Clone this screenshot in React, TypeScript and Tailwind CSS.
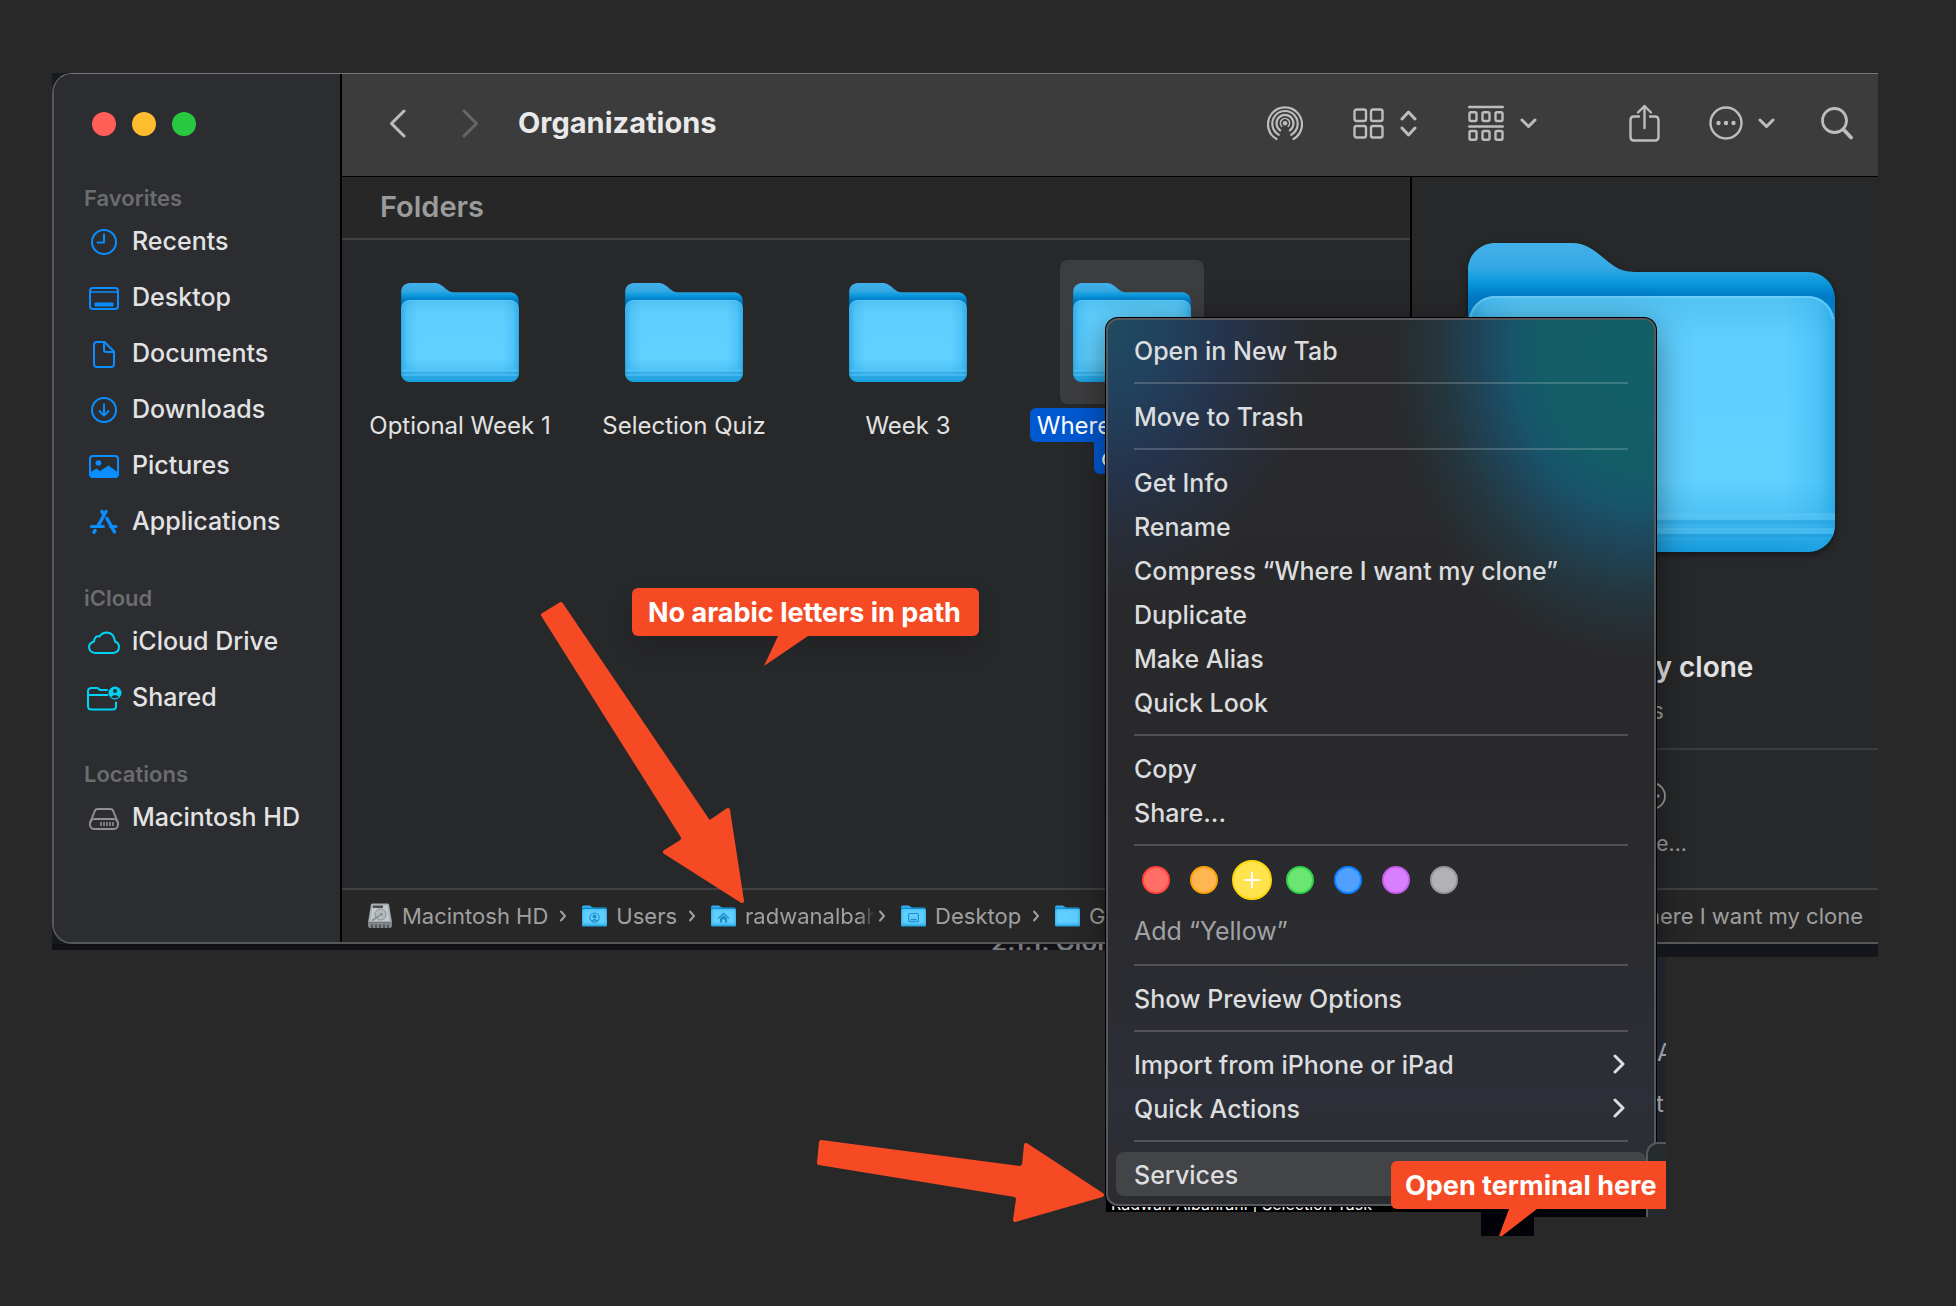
import type { ReactNode } from 'react'

const stroke = {
  fill: 'none',
  stroke: 'currentColor',
  strokeWidth: 2,
  strokeLinecap: 'round' as const,
  strokeLinejoin: 'round' as const,
}

/* ---------- folder artwork ---------- */

function Folder({ id, className, children }: { id: string; className: string; children?: ReactNode }) {
  return (
    <svg viewBox="0 0 367 309" className={className} aria-hidden="true">
      <defs>
        <linearGradient id={`${id}-back`} x1="0" y1="0" x2="0" y2="53" gradientUnits="userSpaceOnUse">
          <stop offset="0" stopColor="#43b0e9" />
          <stop offset="0.45" stopColor="#34a9e4" />
          <stop offset="0.75" stopColor="#0a98db" />
          <stop offset="1" stopColor="#007bc8" />
        </linearGradient>
        <linearGradient id={`${id}-front`} x1="0" y1="0" x2="0" y2="1">
          <stop offset="0" stopColor="#52c2f3" />
          <stop offset="0.18" stopColor="#5fcfff" />
          <stop offset="0.72" stopColor="#60d0ff" />
          <stop offset="0.85" stopColor="#4fc2f5" />
          <stop offset="0.93" stopColor="#2fabe6" />
          <stop offset="1" stopColor="#149cdd" />
        </linearGradient>
        <linearGradient id={`${id}-side`} x1="0" y1="0" x2="1" y2="0">
          <stop offset="0" stopColor="#1b9fe0" stopOpacity="0.7" />
          <stop offset="0.05" stopColor="#2ba9e8" stopOpacity="0.3" />
          <stop offset="0.14" stopColor="#2ba9e8" stopOpacity="0" />
          <stop offset="0.86" stopColor="#2ba9e8" stopOpacity="0" />
          <stop offset="0.95" stopColor="#2ba9e8" stopOpacity="0.3" />
          <stop offset="1" stopColor="#1b9fe0" stopOpacity="0.7" />
        </linearGradient>
      </defs>
      <path
        d="M0 120V27C0 12 12 0 27 0H104C118 0 126 7 137 16C148 25 153 29 170 29H340C355 29 367 41 367 56V120Z"
        fill={`url(#${id}-back)`}
      />
      <rect y="53" width="367" height="256" rx="27" fill={`url(#${id}-front)`} />
      <rect y="53" width="367" height="256" rx="27" fill={`url(#${id}-side)`} />
      <path d="M2 76C5 62 15 54 28 54H339C352 54 362 62 365 76" fill="none" stroke="#84dbff" strokeOpacity="0.5" strokeWidth="2" />
      <path d="M0 270H367V277H0Z" fill="#6bd0fb" fillOpacity="0.35" />
      <path d="M0 277H367V281H0Z" fill="#1f9edb" fillOpacity="0.4" />
      <path d="M1 285H366V291H1Z" fill="#6bd0fb" fillOpacity="0.35" />
      <path d="M2 291H365V294H2Z" fill="#1490d0" fillOpacity="0.3" />
      {children}
    </svg>
  )
}

const userMark = (
  <g fill="none" stroke="#1c8cc9" strokeWidth="16">
    <circle cx="184" cy="178" r="68" />
    <circle cx="184" cy="162" r="22" fill="#1c8cc9" />
    <path d="M142 226Q184 186 226 226" fill="#1c8cc9" />
  </g>
)
const homeMark = (
  <g fill="#1c8cc9">
    <path d="M184 104L270 186L258 198L184 130L110 198L98 186Z" />
    <path d="M132 190L184 142L236 190V250H204V206H164V250H132Z" />
  </g>
)
const deskMark = (
  <g fill="none" stroke="#1c8cc9" strokeWidth="16">
    <rect x="112" y="118" width="144" height="120" rx="14" />
    <path d="M140 208H228" strokeWidth="22" />
  </g>
)

function DriveIcon() {
  return (
    <svg viewBox="0 0 24 26" className="h-[26px] w-6 shrink-0" aria-hidden="true">
      <path d="M3 1.5Q3.2 .5 4.4 .5H19.6Q20.8 .5 21 1.500L24 19.500H0Z" fill="#a9aeb2" />
      <path d="M4.600 2.500H19.400L21.500 18H2.500Z" fill="#c3c8cb" />
      <path d="M5 2.500H15V5H4.700Z" fill="#4a4e52" />
      <circle cx="12.500" cy="11.500" r="5.500" fill="#b4babd" stroke="#868c91" strokeWidth="1" />
      <circle cx="13" cy="11.500" r="1.800" fill="#8d9398" />
      <path d="M4 17.500L11 13" stroke="#858b90" strokeWidth="1.500" />
      <path d="M0 19.500H24V22.500Q24 25 21.500 25H2.500Q0 25 0 22.500Z" fill="#82878b" />
      <path d="M4 21.500V25M8 21.500V25M12 21.500V25M16 21.500V25M20 21.500V25" stroke="#474b4f" strokeWidth="1.500" />
    </svg>
  )
}

/* ---------- sidebar ---------- */

type Item = { label: string; icon: ReactNode; color: string }

const BLUE = 'text-[#0a8dff]'
const CYAN = 'text-[#00d4f5]'

const favorites: Item[] = [
  {
    label: 'Recents',
    color: BLUE,
    icon: (
      <g {...stroke}>
        <circle cx="16" cy="14" r="12" />
        <path d="M16 6.500V14.500H9.500" />
      </g>
    ),
  },
  {
    label: 'Desktop',
    color: BLUE,
    icon: (
      <g {...stroke}>
        <rect x="2" y="4" width="28" height="21" rx="3" />
        <path d="M2 8H30" strokeWidth="1.500" />
        <rect x="6.500" y="18.500" width="19" height="4" rx="1" fill="currentColor" stroke="none" />
      </g>
    ),
  },
  {
    label: 'Documents',
    color: BLUE,
    icon: (
      <g {...stroke}>
        <path d="M9 2H16.500L26 11.500V24Q26 27 23 27H9Q6 27 6 24V5Q6 2 9 2Z" />
        <path d="M16 2.500V10Q16 12 18 12H25.500" />
      </g>
    ),
  },
  {
    label: 'Downloads',
    color: BLUE,
    icon: (
      <g {...stroke}>
        <circle cx="16" cy="14" r="12" />
        <path d="M16 8.500V19M11.500 15L16 19.500L20.500 15" />
      </g>
    ),
  },
  {
    label: 'Pictures',
    color: BLUE,
    icon: (
      <g {...stroke}>
        <rect x="2" y="4" width="28" height="21" rx="3" />
        <circle cx="10.500" cy="11" r="2.800" fill="currentColor" stroke="none" />
        <path d="M2 21L8.500 17L12 19.500L20.500 14L30 21V23Q30 25 28 25H4Q2 25 2 23Z" fill="currentColor" strokeWidth="1" />
      </g>
    ),
  },
  {
    label: 'Applications',
    color: BLUE,
    icon: (
      <g {...stroke} strokeWidth="3.500">
        <path d="M18 3.500L10 18" />
        <path d="M14 3.500L15.500 6" />
        <path d="M19 10.500L26.500 24" />
        <path d="M3.500 18.500H15.500M22.500 18.500H28" strokeWidth="3" />
        <path d="M7 22.500L6 24.200" />
      </g>
    ),
  },
]

const icloud: Item[] = [
  {
    label: 'iCloud Drive',
    color: CYAN,
    icon: (
      <path
        {...stroke}
        d="M7.500 25H25Q31 24.500 31 19Q31 15 27 13.500Q26 5 19 4.500Q14 4.500 11.500 8.500Q6.500 7.500 6 13.500Q1 15 1 19.500Q1.500 24.500 7.500 25Z"
      />
    ),
  },
  {
    label: 'Shared',
    color: CYAN,
    icon: (
      <g {...stroke}>
        <path d="M19 6H12L9.500 4H4Q0 4 0 7V22Q0 25.500 3.500 25.500H24.500Q28 25.500 28 22V18.500" />
        <path d="M0 11H19.500" />
        <circle cx="27" cy="9" r="6.500" fill="currentColor" stroke="none" />
        <circle cx="27" cy="7" r="2" fill="#2c2d31" stroke="none" />
        <path d="M23 13Q27 9 31 13Q27 15.500 23 13Z" fill="#2c2d31" stroke="none" />
      </g>
    ),
  },
]

const locations: Item[] = [
  {
    label: 'Macintosh HD',
    color: 'text-[#8f8f92]',
    icon: (
      <g {...stroke}>
        <path d="M2 19L7 6.500Q7.700 5 9.500 5H22.500Q24.300 5 25 6.500L30 19" />
        <rect x="2" y="15" width="28" height="10" rx="4.500" />
        <path d="M13 18.500V21.500M16 18.500V21.500M19 18.500V21.500M22 18.500V21.500M25 18.500V21.500" strokeWidth="1.600" />
      </g>
    ),
  },
]

function SidebarGroup({ title, items }: { title: string; items: Item[] }) {
  return (
    <section>
      <h2 className="h-8 pl-[30px] text-[22px] leading-8 font-semibold text-[#6b6c70]">{title}</h2>
      {items.map((item) => (
        <button key={item.label} type="button" className="flex h-14 w-full items-center gap-3 pl-[34px] text-left">
          <svg viewBox="0 0 32 28" className={`h-7 w-8 shrink-0 overflow-visible ${item.color}`} aria-hidden="true">
            {item.icon}
          </svg>
          <span className="pb-0.5 text-[25px] leading-8 font-medium text-[#e3e3e4]">{item.label}</span>
        </button>
      ))}
    </section>
  )
}

function Sidebar() {
  return (
    <aside className="w-[288px] shrink-0 border-r-2 border-black bg-[#2c2d31]">
      <div className="flex gap-4 pt-[38px] pl-[38px]">
        <button type="button" aria-label="Close" className="size-6 rounded-full bg-[#ff5f57]" />
        <button type="button" aria-label="Minimize" className="size-6 rounded-full bg-[#febc2e]" />
        <button type="button" aria-label="Zoom" className="size-6 rounded-full bg-[#28c840]" />
      </div>
      <nav className="mt-[46px] flex flex-col gap-8">
        <SidebarGroup title="Favorites" items={favorites} />
        <SidebarGroup title="iCloud" items={icloud} />
        <SidebarGroup title="Locations" items={locations} />
      </nav>
    </aside>
  )
}

/* ---------- toolbar ---------- */

function Chevron() {
  return (
    <svg viewBox="0 0 17 11" className="h-[11px] w-[17px]" aria-hidden="true">
      <path {...stroke} strokeWidth="3" d="M2 2L8.500 8.500L15 2" />
    </svg>
  )
}

function Toolbar() {
  return (
    <header className="flex h-[103px] items-center border-b border-black bg-[#3b3c3b] pr-[25px] pb-1 pl-[47px] text-[#bcbebd]">
      <button type="button" aria-label="Back">
        <svg viewBox="0 0 17 29" className="h-[29px] w-[17px]" aria-hidden="true">
          <path {...stroke} strokeWidth="3" d="M15 2L2.500 14.500L15 27" />
        </svg>
      </button>
      <button type="button" aria-label="Forward" className="ml-14 text-[#656665]">
        <svg viewBox="0 0 17 29" className="h-[29px] w-[17px]" aria-hidden="true">
          <path {...stroke} strokeWidth="3" d="M2 2L14.500 14.500L2 27" />
        </svg>
      </button>
      <h1 className="ml-[39px] text-[29px] leading-9 font-bold text-[#e9e9e9]">Organizations</h1>

      <button type="button" aria-label="AirDrop" className="ml-auto">
        <svg viewBox="0 0 36 36" className="size-9" aria-hidden="true">
          <g {...stroke} strokeWidth="2.200">
            <path d="M9.500 34A17 17 0 1 1 26.500 34" />
            <path d="M11.800 29.800A12.700 12.700 0 1 1 24.200 29.800" />
            <path d="M13.200 25.300A8.500 8.500 0 1 1 22.800 25.300" />
            <path d="M14.700 21.300A4.600 4.600 0 1 1 21.300 21.300" strokeWidth="1.600" />
          </g>
          <circle cx="18" cy="18.300" r="2.300" fill="currentColor" />
        </svg>
      </button>

      <button type="button" aria-label="Icon view" className="ml-[50px] flex items-center gap-4">
        <svg viewBox="0 0 31 31" className="size-[31px]" aria-hidden="true">
          <g {...stroke} strokeWidth="2.400">
            <rect x="1.500" y="1.500" width="11.500" height="11.500" rx="2" />
            <rect x="18" y="1.500" width="11.500" height="11.500" rx="2" />
            <rect x="1.500" y="18" width="11.500" height="11.500" rx="2" />
            <rect x="18" y="18" width="11.500" height="11.500" rx="2" />
          </g>
        </svg>
        <svg viewBox="0 0 17 27" className="h-[27px] w-[17px]" aria-hidden="true">
          <path {...stroke} strokeWidth="3" d="M2 9L8.500 2L15 9M2 18L8.500 25L15 18" />
        </svg>
      </button>

      <button type="button" aria-label="Group items" className="ml-[51px] flex items-center gap-4">
        <svg viewBox="0 0 36 36" className="size-9" aria-hidden="true">
          <g {...stroke} strokeWidth="2.400">
            <path d="M1.200 2H34.800M1.200 21.500H34.800" />
            <rect x="1.500" y="7.200" width="7" height="8.800" rx="1.500" />
            <rect x="14.500" y="7.200" width="7" height="8.800" rx="1.500" />
            <rect x="27.500" y="7.200" width="7" height="8.800" rx="1.500" />
            <rect x="1.500" y="26" width="7" height="8.800" rx="1.500" />
            <rect x="14.500" y="26" width="7" height="8.800" rx="1.500" />
            <rect x="27.500" y="26" width="7" height="8.800" rx="1.500" />
          </g>
        </svg>
        <Chevron />
      </button>

      <button type="button" aria-label="Share" className="ml-[92px]">
        <svg viewBox="0 0 31 38" className="h-[38px] w-[31px]" aria-hidden="true">
          <g {...stroke} strokeWidth="2.400">
            <path d="M10 12.500H5Q1.500 12.500 1.500 16V33Q1.500 36.500 5 36.500H26Q29.500 36.500 29.500 33V16Q29.500 12.500 26 12.500H21" />
            <path d="M15.500 24V2M9 8.500L15.500 2L22 8.500" />
          </g>
        </svg>
      </button>

      <button type="button" aria-label="More actions" className="ml-[49px] flex items-center gap-[15px]">
        <svg viewBox="0 0 34 34" className="size-[34px]" aria-hidden="true">
          <circle {...stroke} strokeWidth="2.400" cx="17" cy="17" r="15.500" />
          <g fill="currentColor">
            <circle cx="9.500" cy="17" r="2.200" />
            <circle cx="17" cy="17" r="2.200" />
            <circle cx="24.500" cy="17" r="2.200" />
          </g>
        </svg>
        <Chevron />
      </button>

      <button type="button" aria-label="Search" className="ml-[46px]">
        <svg viewBox="0 0 32 33" className="h-[33px] w-8" aria-hidden="true">
          <circle {...stroke} strokeWidth="2.800" cx="13.500" cy="13.500" r="12" />
          <path {...stroke} strokeWidth="3.800" d="M22.500 22.500L30 30.500" />
        </svg>
      </button>
    </header>
  )
}

/* ---------- content ---------- */

function FileItem({ name, id }: { name: string; id: string }) {
  return (
    <li className="flex w-36 shrink-0 flex-col items-center">
      <div className="flex size-36 items-center justify-center">
        <Folder id={id} className="h-[99px] w-[118px]" />
      </div>
      <span className="mt-1 h-[34px] text-2xl leading-[36px] whitespace-nowrap text-[#e2e2e2]">{name}</span>
    </li>
  )
}

function Files() {
  return (
    <section className="min-w-0 flex-1 overflow-hidden">
      <h2 className="h-[63px] border-b-2 border-[#414141] bg-[#272727] pl-[38px] text-[29px] leading-[60px] font-semibold text-[#9b9b9b]">
        Folders
      </h2>
      <ul className="flex gap-20 pt-5 pl-[46px]">
        <FileItem id="f1" name="Optional Week 1" />
        <FileItem id="f2" name="Selection Quiz" />
        <FileItem id="f3" name="Week 3" />
        <li className="flex w-36 shrink-0 flex-col items-center">
          <div className="flex size-36 items-center justify-center rounded-lg bg-[#3c3d3e]">
            <Folder id="f4" className="h-[99px] w-[118px]" />
          </div>
          <span className="mt-1 flex flex-col items-center text-2xl whitespace-nowrap text-white">
            <span className="h-[34px] rounded-md bg-[#0058d0] px-[7px] leading-[36px]">Where I want my</span>
            <span className="h-8 rounded-b-md bg-[#0058d0] px-[7px] leading-8">clone</span>
          </span>
        </li>
      </ul>
    </section>
  )
}

function Preview() {
  return (
    <section className="w-[468px] shrink-0 overflow-hidden border-l-2 border-black pt-[66px]">
      <Folder id="preview" className="ml-14 h-[309px] w-[367px] drop-shadow-[0_2px_3px_rgba(0,0,0,0.5)]" />
      <h2 className="mt-[97px] ml-[34px] text-[28px] leading-9 font-semibold whitespace-nowrap text-[#e2e2e2]">Where I want my clone</h2>
      <p className="mt-[10px] ml-[44px] text-[23px] leading-8 text-[#9b9b9b]">Folder - Zero bytes</p>
      <hr className="mt-[21px] ml-[34px] border-t-2 border-[#3b3c3e]" />
      <button type="button" className="mt-8 ml-[204px] flex w-[72px] flex-col items-center text-[#9b9b9b]">
        <svg viewBox="0 0 28 28" className="size-7" aria-hidden="true">
          <circle {...stroke} strokeWidth="1.800" cx="14" cy="14" r="13" />
          <g fill="currentColor">
            <circle cx="8" cy="14" r="1.700" />
            <circle cx="14" cy="14" r="1.700" />
            <circle cx="20" cy="14" r="1.700" />
          </g>
        </svg>
        <span className="mt-5 text-[21px] leading-7">More...</span>
      </button>
    </section>
  )
}

function Separator() {
  return (
    <svg viewBox="0 0 8 12" className="mr-[15px] ml-[11px] h-3 w-2 shrink-0" aria-hidden="true">
      <path {...stroke} d="M2 1.500L6 6L2 10.500" />
    </svg>
  )
}

function PathBar() {
  return (
    <footer className="flex h-[54px] items-center border-t-2 border-[#414141] bg-[#272727] pr-[15px] pl-[26px] text-[22px] leading-8 whitespace-nowrap text-[#a0a0a0]">
      <DriveIcon />
      <span className="ml-[10px]">Macintosh HD</span>
      <Separator />
      <Folder id="p1" className="h-[22px] w-[25px] shrink-0">{userMark}</Folder>
      <span className="ml-[9px]">Users</span>
      <Separator />
      <Folder id="p2" className="h-[22px] w-[25px] shrink-0">{homeMark}</Folder>
      <span className="-mr-2 ml-[9px] w-[130px] overflow-hidden mask-r-from-88% mask-r-to-100%">radwanalbah</span>
      <Separator />
      <Folder id="p3" className="h-[22px] w-[25px] shrink-0">{deskMark}</Folder>
      <span className="ml-[9px]">Desktop</span>
      <Separator />
      <Folder id="p4" className="h-[22px] w-[25px] shrink-0" />
      <span className="ml-[9px]">G</span>
      <span className="ml-auto">Where I want my clone</span>
    </footer>
  )
}

/* ---------- context menu ---------- */

function MenuItem({ label, submenu, active }: { label: string; submenu?: boolean; active?: boolean }) {
  return (
    <button
      type="button"
      role="menuitem"
      className={`flex h-11 w-full items-center justify-between rounded-lg pr-[21px] pl-[18px] text-left text-[25px] leading-8 font-medium text-[#dcdddf] ${active ? 'bg-[#434448]' : ''}`}
    >
      <span className="pt-0.5">{label}</span>
      {submenu && (
        <svg viewBox="0 0 12 20" className="h-5 w-3" aria-hidden="true">
          <path {...stroke} strokeWidth="3" d="M2 2L10 10L2 18" />
        </svg>
      )}
    </button>
  )
}

function Rule() {
  return <hr className="mx-[18px] my-[10px] border-t-2 border-white/18" />
}

const tags = [
  { name: 'Red', style: 'bg-[#ff6f67] border-[#ff453a]' },
  { name: 'Orange', style: 'bg-[#ffb650] border-[#ff9f0a]' },
  { name: 'Yellow', style: 'bg-[#ffe34f] border-[#ffd60a]' },
  { name: 'Green', style: 'bg-[#6be673] border-[#30d14a]' },
  { name: 'Blue', style: 'bg-[#51a0ff] border-[#0a84ff]' },
  { name: 'Purple', style: 'bg-[#d880ff] border-[#c45cf5]' },
  { name: 'Gray', style: 'bg-[#b1b1b6] border-[#98989d]' },
]

function ContextMenu() {
  return (
    <div
      role="menu"
      className="absolute top-[318px] left-[1106px] w-[550px] rounded-xl border-2 border-[#56585b] bg-[#2a2b2e] bg-[radial-gradient(ellipse_250px_310px_at_534px_30px,#125f66_0%,#135d67_38%,#18546a_52%,#1f4559_64%,#24363e_80%,transparent_100%),radial-gradient(ellipse_220px_280px_at_0px_0px,#1e4d62_0%,#22405c_30%,#25344c_55%,#282d38_78%,transparent_100%),linear-gradient(#292a2b_0%,#29292b_50%,#2b2c31_75%,#2d2f38_88%,#2b2c2f_100%)] bg-origin-border p-2 ring-1 ring-black"
    >
      <MenuItem label="Open in New Tab" />
      <Rule />
      <MenuItem label="Move to Trash" />
      <Rule />
      <MenuItem label="Get Info" />
      <MenuItem label="Rename" />
      <MenuItem label="Compress “Where I want my clone”" />
      <MenuItem label="Duplicate" />
      <MenuItem label="Make Alias" />
      <MenuItem label="Quick Look" />
      <Rule />
      <MenuItem label="Copy" />
      <MenuItem label="Share..." />
      <Rule />
      <div className="flex h-12 items-center gap-5 pl-[26px]">
        {tags.map((tag) =>
          tag.name === 'Yellow' ? (
            <button
              key={tag.name}
              type="button"
              aria-label={tag.name}
              className={`-mx-1.5 flex size-10 items-center justify-center rounded-full border-2 text-white ${tag.style}`}
            >
              <svg viewBox="0 0 16 16" className="size-4" aria-hidden="true">
                <path {...stroke} strokeWidth="2.200" d="M8 1V15M1 8H15" />
              </svg>
            </button>
          ) : (
            <button key={tag.name} type="button" aria-label={tag.name} className={`size-7 rounded-full border-2 ${tag.style}`} />
          ),
        )}
      </div>
      <p className="mt-1 h-[46px] pl-[18px] text-[25px] leading-[46px] text-[#a1a2a5]">Add “Yellow”</p>
      <Rule />
      <MenuItem label="Show Preview Options" />
      <Rule />
      <MenuItem label="Import from iPhone or iPad" submenu />
      <MenuItem label="Quick Actions" submenu />
      <Rule />
      <MenuItem label="Services" active />
    </div>
  )
}

/* ---------- annotations ---------- */

function Annotations() {
  return (
    <>
      <svg viewBox="0 0 208 306" className="absolute top-[599px] left-[538px] h-[306px] w-[208px]" aria-hidden="true">
        <path
          d="M5 16L23 5L170 222Q172 223 174 222L190 211L204 302L127 253L143 243Q146 241 145 238Z"
          fill="#f54a24"
          stroke="#f54a24"
          strokeWidth="4"
          strokeLinejoin="round"
        />
      </svg>
      <svg viewBox="0 0 294 88" className="absolute top-[1137px] left-[814px] h-[88px] w-[294px]" aria-hidden="true">
        <path
          d="M7 5L205 31Q209 31 210 28L212 8L288 58L201 83L204 62Q204 59 201 58L5 26Z"
          fill="#f54a24"
          stroke="#f54a24"
          strokeWidth="4"
          strokeLinejoin="round"
        />
      </svg>

      <div className="absolute top-[588px] left-[632px] h-12 rounded-md bg-[#f54a24] pr-[18px] pl-4 text-[27px] leading-[50px] font-bold whitespace-nowrap text-white shadow-[0_12px_24px_rgba(0,0,0,0.14)]">
        No arabic letters in path
        <svg viewBox="0 0 44 32" className="absolute top-[47px] left-[132px] h-8 w-11" aria-hidden="true">
          <path d="M14 0H44V1L0 31L14 1Z" fill="#f54a24" />
        </svg>
      </div>

      <div className="absolute top-[1161px] left-[1391px] h-12 w-[275px] rounded-l-md bg-[#f54a24] pl-[14px] text-[27px] leading-[50px] font-bold whitespace-nowrap text-white">
        Open terminal here
        <svg viewBox="0 0 38 29" className="absolute top-[47px] left-[108px] h-[29px] w-[38px]" aria-hidden="true">
          <path d="M10 0H38V1L3 28H0L10 1Z" fill="#f54a24" />
        </svg>
      </div>
    </>
  )
}

/* Slivers of the page that sits behind the menu. */
function Behind() {
  return (
    <div className="text-[#9a9da8]">
      <div className="absolute top-[957px] left-[1657px] h-[260px] w-[9px] overflow-hidden bg-[#20232b] text-2xl leading-8">
        <span className="absolute top-[80px] left-0">A</span>
        <span className="absolute top-[131px] -left-px">t</span>
      </div>
      <div className="absolute top-[1190px] left-[1106px] h-[22px] w-[375px] bg-black" />
      <div className="absolute top-[1206px] left-[1106px] flex h-1.5 w-[375px] items-end overflow-hidden pl-[5px] text-base leading-5 whitespace-nowrap text-white">
        <span className="-mb-0.5">Radwan Albahrani | Selection Task</span>
      </div>
      <div className="absolute top-[1200px] left-[1481px] h-9 w-[53px] bg-[#020308]" />
      <div className="absolute top-[1200px] left-[1534px] h-[17px] w-[132px] bg-[#020308]" />
    </div>
  )
}

export default function App() {
  return (
    <main className="relative min-h-screen overflow-hidden bg-[#282828] pt-[73px] pr-[78px] pl-[52px] font-['Inter',sans-serif]">
      <div className="bg-[#16191e]">
        <div className="relative flex overflow-hidden rounded-l-[20px] border-t border-b-2 border-l-2 border-t-[#777877] border-b-[#56575a] border-l-[#56575a]">
          <Sidebar />
          <div className="flex min-w-0 flex-1 flex-col bg-[#27282a]">
            <Toolbar />
            <div className="flex h-[711px]">
              <Files />
              <Preview />
            </div>
            <PathBar />
          </div>
          <div className="pointer-events-none absolute top-[244px] left-[1052px] h-[760px] w-[550px] rounded-xl shadow-[0_8px_36px_rgba(0,0,0,0.45)]" />
        </div>
      </div>
      <div className="flex items-start">
        <div className="flex h-1.5 flex-1 items-end overflow-hidden bg-[#101216] pl-[939px] text-[26px] leading-7 font-semibold whitespace-nowrap text-[#77797d]">
          <span className="-mb-1.5">2.1.1. Clone</span>
        </div>
        <div className="h-[13px] w-[221px] bg-[#14161b]" />
      </div>
      <Behind />
      <ContextMenu />
      <div className="absolute top-[1142px] left-[1646px] h-[75px] w-5 rounded-tl-xl border-t-2 border-l-2 border-[#56585b] bg-[#262b2e]" />
      <Annotations />
    </main>
  )
}
